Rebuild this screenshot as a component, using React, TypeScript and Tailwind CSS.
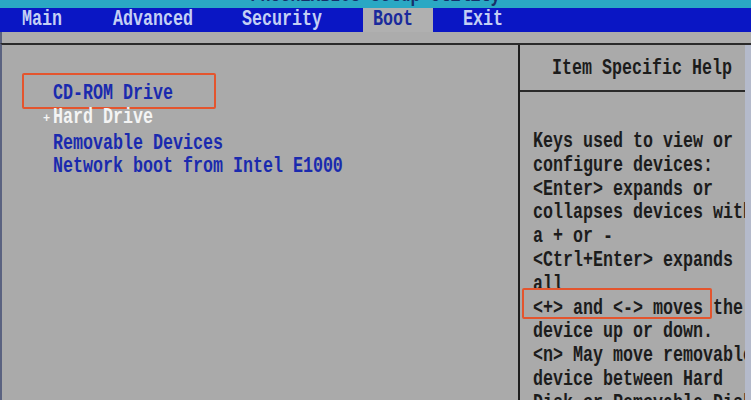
import React from "react";

const helpLines = [
  "Keys used to view or",
  "configure devices:",
  "<Enter> expands or",
  "collapses devices with",
  "a + or -",
  "<Ctrl+Enter> expands",
  "all",
  "<+> and <-> moves the",
  "device up or down.",
  "<n> May move removable",
  "device between Hard",
  "Disk or Removable Disk",
];

// tall narrow bios glyphs
function Tall({ children }: { children: React.ReactNode }) {
  return <span className="inline-block scale-y-[1.3] origin-center">{children}</span>;
}

export default function App() {
  return (
    <div
      className="w-[751px] h-[400px] overflow-hidden flex flex-col bg-[#aaaaaa] font-bold text-[16.67px]"
      style={{ fontFamily: '"Liberation Mono", "DejaVu Sans Mono", monospace' }}
    >
      {/* title strip, mostly cut off */}
      <div className="h-[8px] shrink-0 bg-[#2aa8c4] overflow-hidden flex justify-center">
        <div className="-mt-[16px] leading-[24px] text-[#17306a] whitespace-pre">
          <Tall>PhoenixBIOS Setup Utility</Tall>
        </div>
      </div>

      {/* menu bar */}
      <div className="h-[24px] shrink-0 bg-[#0a16c4] flex items-stretch leading-[24px] text-[#c4d0f4] whitespace-pre">
        <span className="ml-[22px]"><Tall>Main</Tall></span>
        <span className="ml-[51px]"><Tall>Advanced</Tall></span>
        <span className="ml-[49px]"><Tall>Security</Tall></span>
        <span className="ml-[41px] pl-[10px] pr-[20px] bg-[#b0b0b0] text-[#1a2a9c]"><Tall>Boot</Tall></span>
        <span className="ml-[30px]"><Tall>Exit</Tall></span>
      </div>

      <div className="h-[11px] shrink-0 bg-[#acacac] border-l-2 border-[#5a6280]" />

      {/* body */}
      <div className="flex-1 min-h-0 overflow-hidden flex border-t-2 border-[#2a2a2a] border-l-2 border-l-[#5a6280]">
        <div className="w-[518px] shrink-0 pt-[37px] pl-[41px] leading-[23.8px] text-[#1a2aae] whitespace-pre border-r-2 border-[#1e1e1e]">
          <div className="relative pl-[10px]">
            <Tall>CD-ROM Drive</Tall>
            <span className="absolute left-[-21px] top-[-9px] w-[194px] h-[36px] border-2 border-[#e4552e] rounded-[2px]" />
          </div>
          <div className="text-[#f4f4f4]">
            <span className="inline-block w-[10px] text-[12px]">+</span>
            <Tall>Hard Drive</Tall>
          </div>
          <div className="pl-[10px]"><Tall>Removable Devices</Tall></div>
          <div className="pl-[10px]"><Tall>Network boot from Intel E1000</Tall></div>
        </div>

        <div className="flex-1 min-w-0 overflow-hidden flex flex-col text-[#1c1c1c] whitespace-pre">
          <div className="h-[47px] shrink-0 flex items-center pt-[3px] pl-[32px] leading-[24px] border-b-2 border-[#2a2a2a]">
            <Tall>Item Specific Help</Tall>
          </div>
          <div className="pt-[38px] pl-[13px] leading-[23.8px]">
            {helpLines.map((line, i) => (
              <div key={i} className="relative">
                <Tall>{line}</Tall>
                {i === 7 && (
                  <span className="absolute left-[-11px] top-[-9px] w-[190px] h-[31px] border-2 border-[#e4552e] rounded-[2px]" />
                )}
              </div>
            ))}
          </div>
        </div>
        <div className="w-[6px] shrink-0 bg-[#b4bacb]" />
      </div>
    </div>
  );
}
